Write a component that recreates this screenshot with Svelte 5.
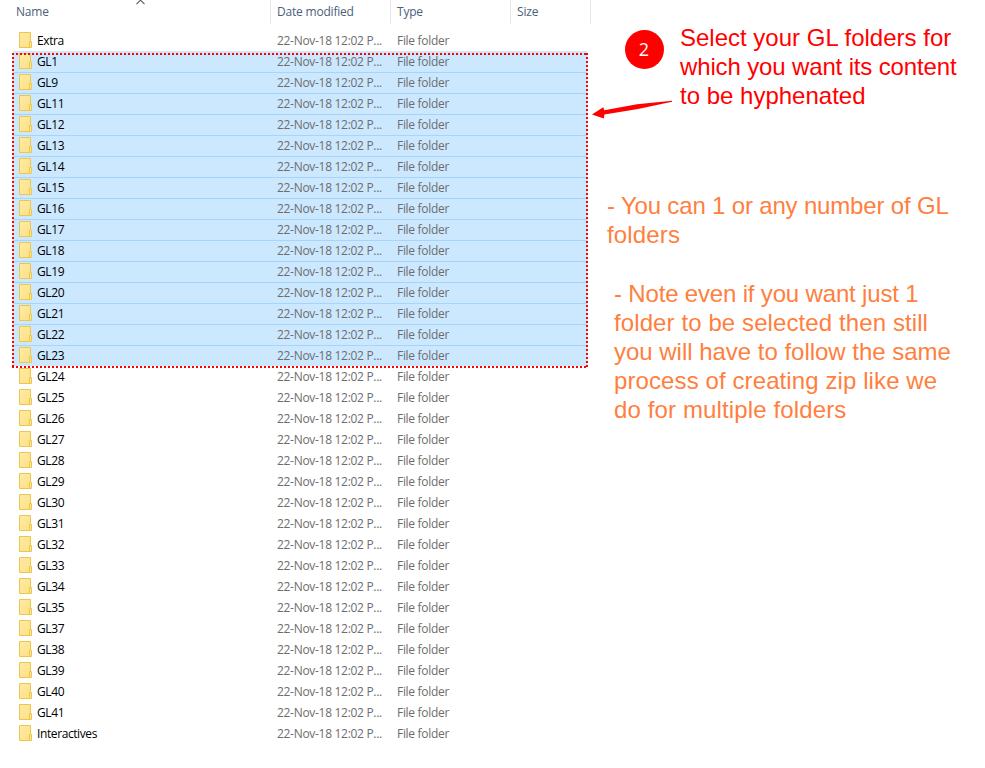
<script>
  const numbers = [1, 9, ...Array.from({ length: 25 }, (_, i) => i + 11), 37, 38, 39, 40, 41];
  const folders = ['Extra', ...numbers.map((n) => `GL${n}`), 'Interactives'];
  const selected = (i) => i >= 1 && i <= 15;
  // Each line carries its tracking in pixels.
  const intro = [
    ['Select your GL folders for', 0],
    ['which you want its content', -0.14],
    ['to be hyphenated', 0]
  ];
  const tip = [
    ['- You can 1 or any number of GL', -0.17],
    ['folders', 0.15]
  ];
  const note = [
    ['- Note even if you want just 1', -0.17],
    ['folder to be selected then still', 0.1],
    ['you will have to follow the same', -0.02],
    ['process of creating zip like we', 0.1],
    ['do for multiple folders', 0.13]
  ];
</script>

{#snippet lines(items)}
  {#each items as [text, tracking]}
    <span style:letter-spacing="{tracking}px">{text}</span>
  {/each}
{/snippet}

<main>
  <section class="explorer">
    <header>
      <span class="name">Name</span>
      <span class="date">Date modified</span>
      <span class="type">Type</span>
      <span class="size">Size</span>
      <svg class="sort" width="10" height="5" viewBox="0 0 10 5"><path d="M1.5 4.2 5.5 .2 9.5 4.2" fill="none" stroke="#555" stroke-width="1.1" /></svg>
    </header>
    <div class="list">
      {#each folders as folder, i}
        <div class="row" class:selected={selected(i)}>
          <span class="name">
            <svg width="14" height="17" viewBox="0 0 14 17">
              <defs>
                <linearGradient id="fold" x1="0" x2="1" y1="0" y2="1">
                  <stop offset="0" stop-color="#ffeba6" /><stop offset="1" stop-color="#fde084" />
                </linearGradient>
              </defs>
              <path d="M.5.5h11v15H.5z" fill="url(#fold)" stroke="#ecc74e" />
              <path d="M10.5 15.5V9.5h2v6z" fill="#ffe793" stroke="#ecc74e" />
            </svg>
            <span class="label">{folder}</span>
          </span>
          <span class="date">22-Nov-18 12:02 P...</span>
          <span class="type">File folder</span>
        </div>
      {/each}
    </div>
    <svg class="frame" width="576" height="315" viewBox="0 0 576 315">
      <path d="M0 1H576M0 314H576M1 0V315M575 0V315" fill="none" stroke="#f00" stroke-width="2" stroke-dasharray="2 2" />
    </svg>
  </section>

  <aside>
    <div class="step">
      <div class="badge">2</div>
      <p class="intro">{@render lines(intro)}</p>
    </div>
    <p class="tip">{@render lines(tip)}</p>
    <p class="note">{@render lines(note)}</p>
    <svg class="arrow" width="84" height="22" viewBox="0 0 84 22">
      <path d="M1 14.5 12.2 7.3 13.3 10.2 46 4.2 81 .8V1.8L47 9 13.4 14.6 12.8 18.4Z" fill="#f00" />
    </svg>
  </aside>
</main>

<style>
  :global(body) { margin: 0; background: #fff; }
  main { display: flex; width: 985px; height: 768px; overflow: hidden; background: #fff; }
  .explorer { position: relative; flex: 0 0 591px; font: 12px/21px 'Open Sans', 'Noto Sans', sans-serif; letter-spacing: -0.3px; }
  header { display: flex; height: 24px; color: #4c607a; letter-spacing: -0.2px; }
  header > span { box-sizing: border-box; border-right: 1px solid #e5e5e5; padding: 1px 0 0 6px; }
  header .name { width: 271px; padding-left: 16px; }
  header .date { width: 120px; }
  header .type { width: 120px; }
  header .size { width: 80px; }
  .sort { position: absolute; left: 135px; top: 0; }
  .list { padding: 6px 4px 0 13px; }
  .row { display: flex; height: 21px; color: #6d6d6d; white-space: nowrap; }
  .row.selected { background: #cce8ff; }
  .row.selected + .row.selected { box-shadow: inset 0 1px #a5d5fd; }
  .row .name { display: flex; width: 264px; color: #000; letter-spacing: -0.4px; }
  .row .name svg { flex: none; margin: 2px 4px 0 6px; }
  .row .date { width: 120px; }
  .frame { position: absolute; left: 12px; top: 53px; }
  aside { position: relative; width: 394px; font: 24px/29px 'Liberation Sans', Arial, sans-serif; color: #ff7f40; }
  p { margin: 0; white-space: nowrap; }
  p span { display: block; }
  .step { display: flex; padding: 23px 0 0 34px; color: #f00; }
  .badge { width: 39px; height: 39px; margin: 7px 16px 0 0; border-radius: 50%; background: #f00; color: #fff; font: 18px/39px 'Open Sans', sans-serif; text-align: center; text-indent: -1px; }
  .tip { padding: 81px 0 0 16px; }
  .note { padding: 30px 0 0 23px; }
  .arrow { position: absolute; left: 0; top: 100px; }
</style>
